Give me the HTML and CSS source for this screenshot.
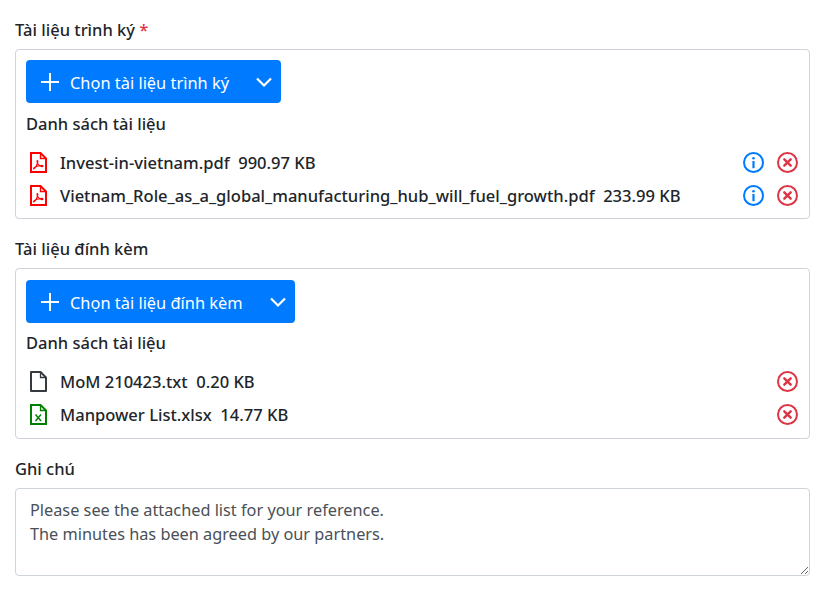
FILE: index.html
```html
<!DOCTYPE html>
<html lang="vi">
<head>
<meta charset="utf-8">
<title>Tài liệu</title>
<link rel="stylesheet" href="styles.css">
</head>
<body>
<svg class="defs" width="0" height="0" aria-hidden="true">
  <symbol id="i-pdf" viewBox="0 0 17 21">
    <path fill="none" stroke="currentColor" stroke-width="2" d="M1 1h9.500L16 6.500V20H1z"/>
    <path fill="none" stroke="currentColor" stroke-width="1.400" d="M10.500 1v5.500H16"/>
    <path fill="none" stroke="currentColor" stroke-width="1.200" d="M3.800 16.800c1.500-.8 3.300-3.900 3.900-6.600.2-1 .1-1.600-.3-1.600-.5 0-.5 1.300.3 2.900.8 1.500 2.200 2.800 4 3.100.9.100 1.300-.2 1.200-.6-.1-.5-1-.6-2.200-.5-2.200.2-5 1-6.300 2-.7.500-.9 1-.6 1.100z"/>
  </symbol>
  <symbol id="i-file" viewBox="0 0 17 21">
    <path fill="none" stroke="currentColor" stroke-width="2" stroke-linejoin="round" d="M1 1h9.500L16 6.500V20H1z"/>
    <path fill="none" stroke="currentColor" stroke-width="1.300" d="M10.500 1v5.500H16"/>
  </symbol>
  <symbol id="i-xls" viewBox="0 0 17 21">
    <path fill="none" stroke="currentColor" stroke-width="2" d="M1 1h9.500L16 6.500V20H1z"/>
    <path fill="none" stroke="currentColor" stroke-width="1.300" d="M10.500 1v5.500H16"/>
    <path fill="none" stroke="currentColor" stroke-width="1.500" d="M5.500 10.500l5.500 6.500M11 10.500l-5.500 6.500"/>
  </symbol>
  <symbol id="i-info" viewBox="0 0 21 21">
    <circle cx="10.500" cy="10.500" r="9.500" fill="none" stroke="currentColor" stroke-width="2"/>
    <circle cx="10.500" cy="6.300" r="1.300" fill="currentColor"/>
    <rect x="9.400" y="9" width="2.200" height="7.200" fill="currentColor"/>
  </symbol>
  <symbol id="i-x" viewBox="0 0 21 21">
    <circle cx="10.500" cy="10.500" r="9.500" fill="none" stroke="currentColor" stroke-width="2"/>
    <path fill="none" stroke="currentColor" stroke-width="2.400" stroke-linecap="round" d="M7.300 7.300l6.400 6.400M13.700 7.300l-6.400 6.400"/>
  </symbol>
</svg>

<main class="form">
  <section class="field">
    <h2 class="label">Tài liệu trình ký <span class="req">*</span></h2>
    <div class="panel">
      <div class="pick">
        <svg class="plus" viewBox="0 0 18 18"><path d="M9 0v18M0 9h18"/></svg>
        <span class="pick-text">Chọn tài liệu trình ký</span>
        <svg class="chev" viewBox="0 0 18 12"><path d="M2 2.500l7 7 7-7"/></svg>
      </div>
      <h3 class="list-title">Danh sách tài liệu</h3>
      <ul class="files">
        <li class="file"><svg class="ftype red"><use href="#i-pdf"/></svg><span class="fname">Invest-in-vietnam.pdf&nbsp; 990.97 KB</span><svg class="act blue"><use href="#i-info"/></svg><svg class="act danger"><use href="#i-x"/></svg></li>
        <li class="file"><svg class="ftype red"><use href="#i-pdf"/></svg><span class="fname">Vietnam_Role_as_a_global_manufacturing_hub_will_fuel_growth.pdf&nbsp; 233.99 KB</span><svg class="act blue"><use href="#i-info"/></svg><svg class="act danger"><use href="#i-x"/></svg></li>
      </ul>
    </div>
  </section>

  <section class="field">
    <h2 class="label">Tài liệu đính kèm</h2>
    <div class="panel panel-second">
      <div class="pick">
        <svg class="plus" viewBox="0 0 18 18"><path d="M9 0v18M0 9h18"/></svg>
        <span class="pick-text">Chọn tài liệu đính kèm</span>
        <svg class="chev" viewBox="0 0 18 12"><path d="M2 2.500l7 7 7-7"/></svg>
      </div>
      <h3 class="list-title">Danh sách tài liệu</h3>
      <ul class="files">
        <li class="file"><svg class="ftype dark"><use href="#i-file"/></svg><span class="fname">MoM 210423.txt&nbsp; 0.20 KB</span><svg class="act danger"><use href="#i-x"/></svg></li>
        <li class="file"><svg class="ftype green"><use href="#i-xls"/></svg><span class="fname">Manpower List.xlsx&nbsp; 14.77 KB</span><svg class="act danger"><use href="#i-x"/></svg></li>
      </ul>
    </div>
  </section>

  <section class="field">
    <h2 class="label">Ghi chú</h2>
    <textarea class="note" rows="3">Please see the attached list for your reference.
The minutes has been agreed by our partners.</textarea>
  </section>
</main>
</body>
</html>
```
FILE: styles.css
```css
* { box-sizing: border-box; }
html, body { margin: 0; background: #fff; }
body {
  font-family: "Noto Sans", "Open Sans", sans-serif;
  font-size: 16.4px;
  color: #212529;
  overflow: hidden;
}
.defs { position: absolute; }
.form { padding: 18px 14px 0 15px; }
.field { margin-bottom: 18px; }
.label {
  margin: 0 0 7px;
  font-size: 16.5px;
  font-weight: 500;
  line-height: 24px;
  height: 24px;
}
.req { color: #dc3545; }
.panel {
  border: 1px solid #ced4da;
  border-radius: 4px;
  padding: 10px 10px 0;
  height: 170px;
}
.panel-second { padding-top: 11px; height: 171px; }
.pick {
  display: inline-flex;
  align-items: center;
  height: 43px;
  background: #007bff;
  border-radius: 4px;
  color: #fff;
  padding: 0 8px 0 15px;
}
.plus { width: 18px; height: 18px; fill: none; stroke: #fff; stroke-width: 2; }
.pick-text { margin-left: 11px; padding-top: 2px; line-height: 24px; }
.chev { width: 18px; height: 12px; margin-left: 26px; fill: none; stroke: #fff; stroke-width: 2.200; }
.list-title {
  margin: 9px 0 0;
  font-size: 16.5px;
  font-weight: 500;
  line-height: 24px;
}
.panel-second .list-title { margin-top: 8px; }
.files { list-style: none; margin: 10px 0 0; padding: 0; }
.file { display: flex; align-items: center; height: 33px; padding-left: 4px; }
.ftype { width: 17px; height: 21px; flex: none; margin-right: 13px; }
.fname { flex: 1; font-size: 16.55px; font-weight: 500; line-height: 24px; white-space: nowrap; }
.act { width: 21px; height: 21px; flex: none; margin-right: 1px; margin-left: 12px; }
.red { color: #f00; }
.dark { color: #343a40; }
.green { color: #008000; }
.blue { color: #007bff; }
.danger { color: #dc3545; }
.note {
  display: block;
  width: 100%;
  height: 88px;
  border: 1px solid #ced4da;
  border-radius: 4px;
  padding: 9px 14px;
  font: inherit;
  font-size: 16.3px;
  line-height: 24px;
  color: #495057;
}
```
